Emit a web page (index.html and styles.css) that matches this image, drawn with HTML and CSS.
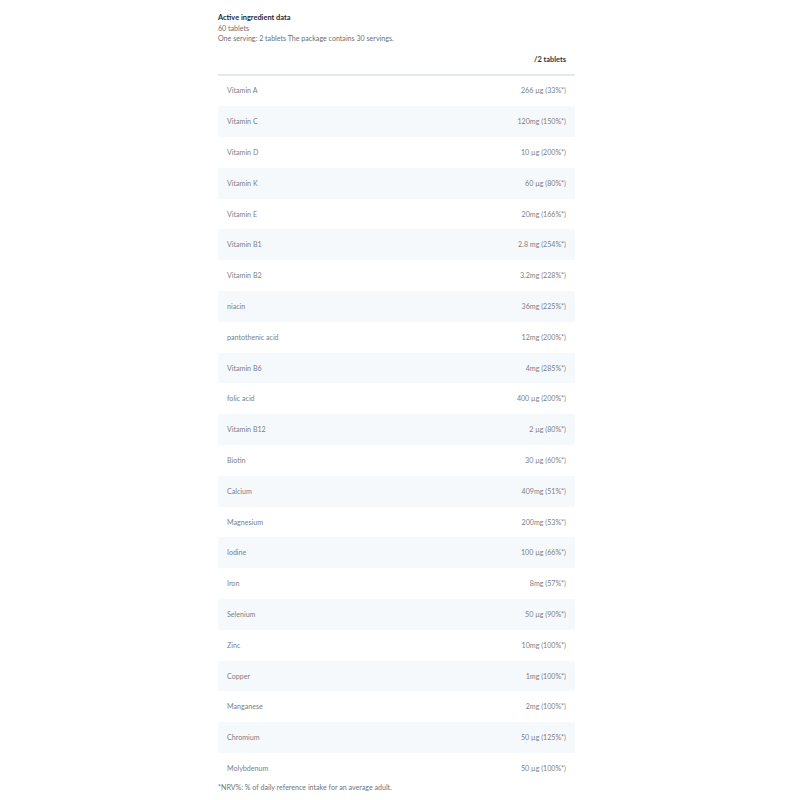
FILE: index.html
```html
<!DOCTYPE html>
<html>
<head>
<meta charset="utf-8">
<link rel="stylesheet" href="styles.css">
</head>
<body>
<div class="panel">
  <div class="title">Active ingredient data</div>
  <div class="sub">60 tablets</div>
  <div class="sub">One serving: 2 tablets The package contains 30 servings.</div>
  <div class="head"><span>/2 tablets</span></div>
  <div class="rows">
    <div class="row"><span>Vitamin A</span><span>266 µg (33%*)</span></div>
    <div class="row"><span>Vitamin C</span><span>120mg (150%*)</span></div>
    <div class="row"><span>Vitamin D</span><span>10 µg (200%*)</span></div>
    <div class="row"><span>Vitamin K</span><span>60 µg (80%*)</span></div>
    <div class="row"><span>Vitamin E</span><span>20mg (166%*)</span></div>
    <div class="row"><span>Vitamin B1</span><span>2.8 mg (254%*)</span></div>
    <div class="row"><span>Vitamin B2</span><span>3.2mg (228%*)</span></div>
    <div class="row"><span>niacin</span><span>36mg (225%*)</span></div>
    <div class="row"><span>pantothenic acid</span><span>12mg (200%*)</span></div>
    <div class="row"><span>Vitamin B6</span><span>4mg (285%*)</span></div>
    <div class="row"><span>folic acid</span><span>400 µg (200%*)</span></div>
    <div class="row"><span>Vitamin B12</span><span>2 µg (80%*)</span></div>
    <div class="row"><span>Biotin</span><span>30 µg (60%*)</span></div>
    <div class="row"><span>Calcium</span><span>409mg (51%*)</span></div>
    <div class="row"><span>Magnesium</span><span>200mg (53%*)</span></div>
    <div class="row"><span>Iodine</span><span>100 µg (66%*)</span></div>
    <div class="row"><span>Iron</span><span>8mg (57%*)</span></div>
    <div class="row"><span>Selenium</span><span>50 µg (90%*)</span></div>
    <div class="row"><span>Zinc</span><span>10mg (100%*)</span></div>
    <div class="row"><span>Copper</span><span>1mg (100%*)</span></div>
    <div class="row"><span>Manganese</span><span>2mg (100%*)</span></div>
    <div class="row"><span>Chromium</span><span>50 µg (125%*)</span></div>
    <div class="row"><span>Molybdenum</span><span>50 µg (100%*)</span></div>
  </div>
  <div class="note">*NRV%: % of daily reference intake for an average adult.</div>
</div>
</body>
</html>
```
FILE: styles.css
```css
html, body {
  margin: 0;
  padding: 0;
  background: #ffffff;
}
body {
  font-family: Lato, "Liberation Sans", sans-serif;
  font-size: 7.1px;
  color: #6f747a;
}
.panel {
  width: 357px;
  margin-left: 218px;
  padding-top: 13px;
}
.title {
  font-weight: 700;
  color: #1d2a38;
  font-size: 7.4px;
  line-height: 10.5px;
}
.sub {
  line-height: 10.5px;
  color: #6a6f75;
}
.head {
  display: flex;
  justify-content: flex-end;
  padding: 10px 9px 0 0;
  box-sizing: border-box;
  font-weight: 700;
  color: #2a3643;
  font-size: 7.4px;
  line-height: 10px;
  border-bottom: 2px solid #e3e8ee;
  height: 31px;
}
.rows {
  display: flex;
  flex-direction: column;
}
.row {
  display: flex;
  justify-content: space-between;
  align-items: center;
  height: 30.8px;
  padding: 0 9px;
  color: #7a7f85;
}
.row:nth-child(even) {
  background: #f6f9fc;
  border-radius: 2px;
}
.note {
  line-height: 10px;
  color: #6f747a;
  margin-top: -1px;
}
```
